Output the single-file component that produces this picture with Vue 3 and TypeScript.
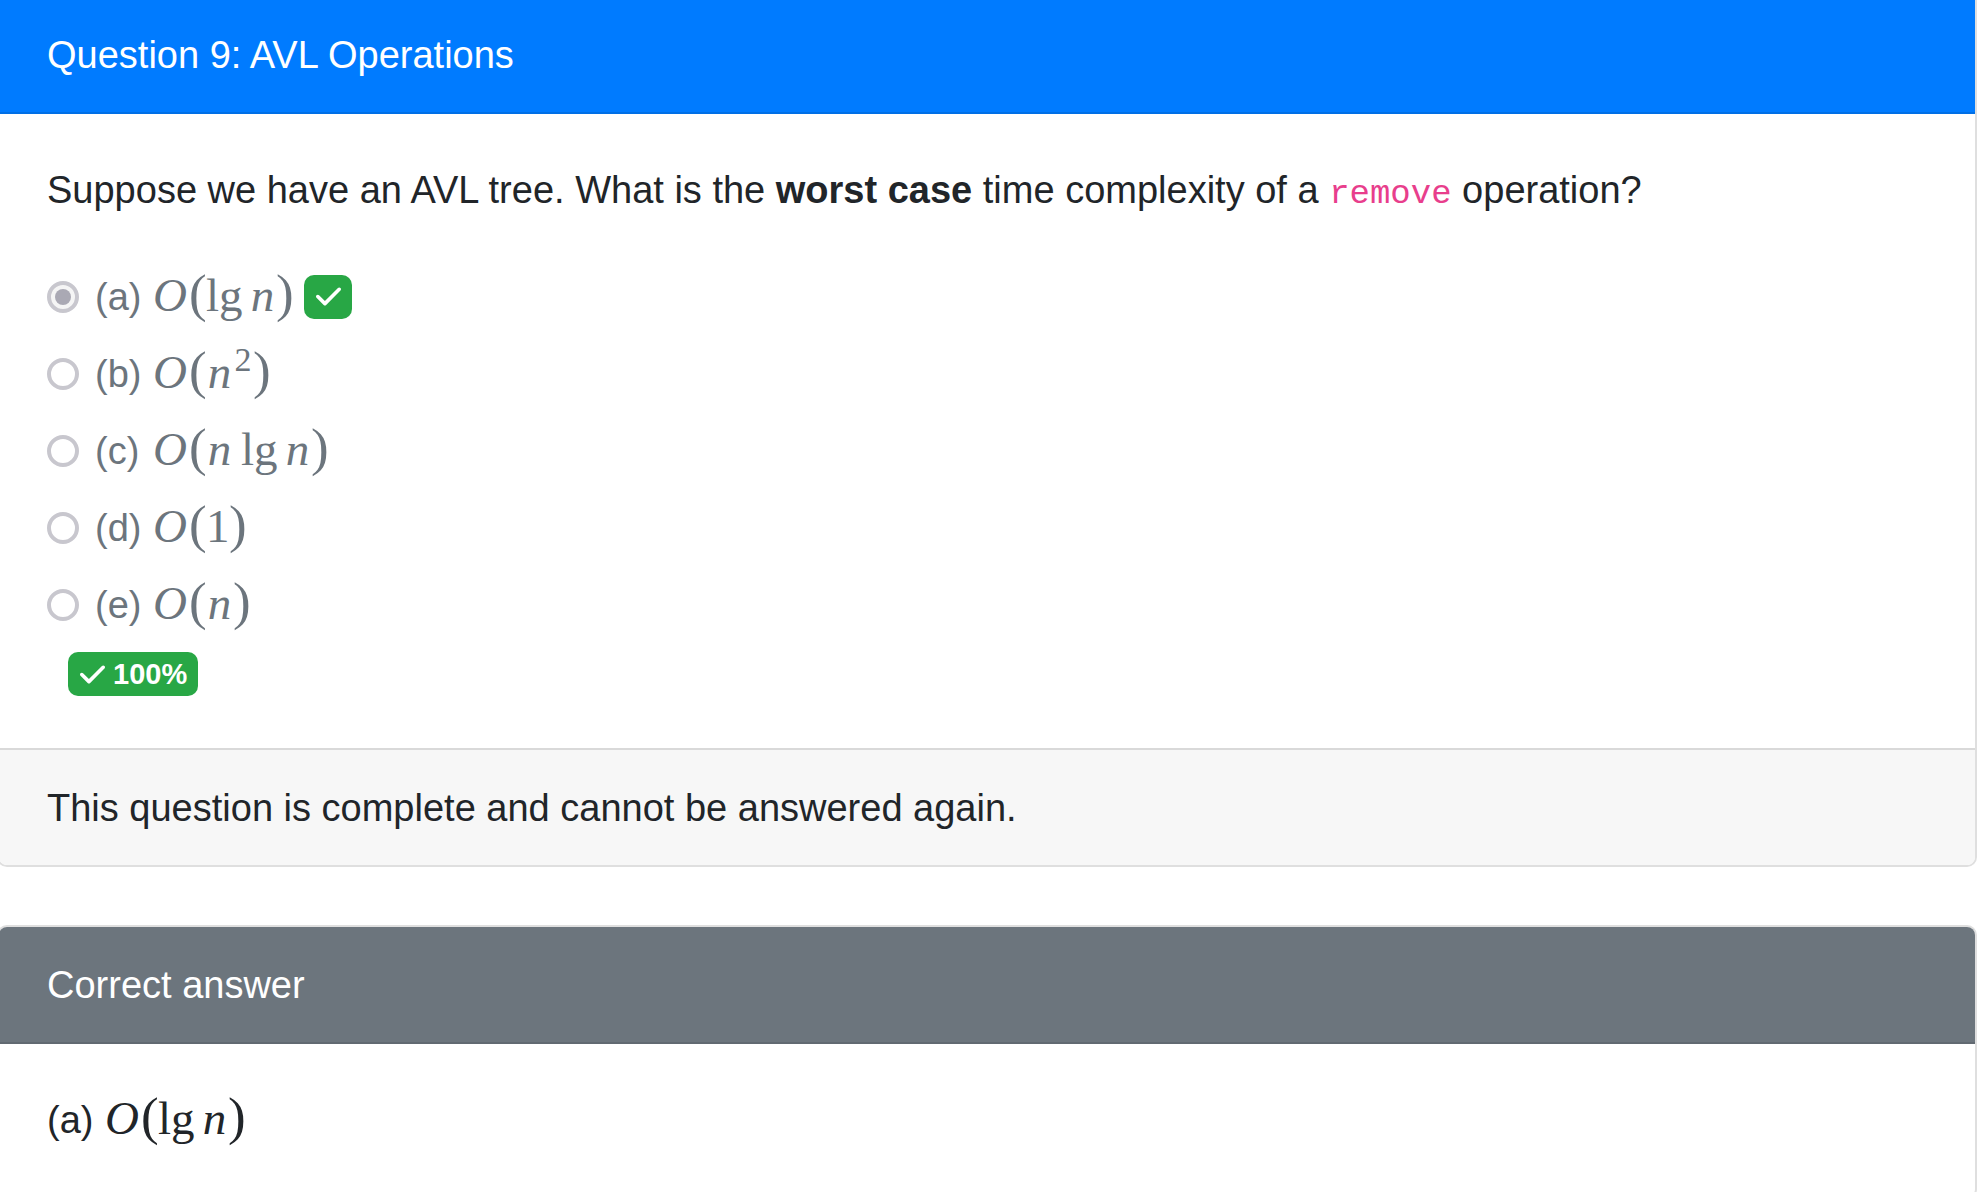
<script setup lang="ts">
interface Atom {
  kind: 'big' | 'var' | 'op' | 'num' | 'open' | 'close' | 'sup'
  text: string
}
interface Choice {
  key: string
  formula: Atom[]
  correct: boolean
}

const O: Atom = { kind: 'big', text: 'O' }
const open: Atom = { kind: 'open', text: '(' }
const close: Atom = { kind: 'close', text: ')' }
const n: Atom = { kind: 'var', text: 'n' }
const lg: Atom = { kind: 'op', text: 'lg' }

const choices: Choice[] = [
  { key: 'a', formula: [O, open, lg, n, close], correct: true },
  { key: 'b', formula: [O, open, n, { kind: 'sup', text: '2' }, close], correct: false },
  { key: 'c', formula: [O, open, n, lg, n, close], correct: false },
  { key: 'd', formula: [O, open, { kind: 'num', text: '1' }, close], correct: false },
  { key: 'e', formula: [O, open, n, close], correct: false },
]

const answer = choices[0]
const checkPath =
  'M438.6 105.4c12.5 12.5 12.5 32.8 0 45.3l-256 256c-12.5 12.5-32.8 12.5-45.3 0l-128-128c-12.5-12.5-12.5-32.8 0-45.3s32.8-12.5 45.3 0L160 338.7 393.4 105.4c12.5-12.5 32.8-12.5 45.3 0z'
</script>

<template>
  <main class="page">
    <section class="card question">
      <h1 class="card-header primary">Question 9: AVL Operations</h1>
      <div class="card-body">
        <p class="prompt">
          Suppose we have an AVL tree. What is the <strong>worst case</strong> time complexity of a
          <code>remove</code> operation?
        </p>
        <div v-for="choice in choices" :key="choice.key" class="choice">
          <input
            :id="'choice-' + choice.key"
            type="radio"
            name="complexity"
            :value="choice.key"
            :checked="choice.correct"
            disabled
          />
          <label :for="'choice-' + choice.key">
            <span class="key">({{ choice.key }})</span>
            <span class="math"><span v-for="(atom, i) in choice.formula" :key="i" :class="atom.kind">{{ atom.text }}</span></span>
          </label>
          <span v-if="choice.correct" class="badge">
            <svg viewBox="0 0 448 512" role="img" aria-label="Correct"><path :d="checkPath" /></svg>
          </span>
        </div>
        <div class="score">
          <span class="badge">
            <svg viewBox="0 0 448 512" aria-hidden="true"><path :d="checkPath" /></svg>
            <span>100%</span>
          </span>
        </div>
      </div>
      <footer class="card-footer">This question is complete and cannot be answered again.</footer>
    </section>

    <section class="card">
      <h2 class="card-header secondary">Correct answer</h2>
      <div class="card-body">
        <div class="answer">
          <span class="key">({{ answer.key }})</span>
          <span class="math"><span v-for="(atom, i) in answer.formula" :key="i" :class="atom.kind">{{ atom.text }}</span></span>
        </div>
      </div>
    </section>
  </main>
</template>

<style>
body {
  margin: 0;
  background: #fff;
}
</style>

<style scoped>
.page {
  box-sizing: border-box;
  height: 100vh;
  overflow: hidden;
  font-family: 'Liberation Sans', Arial, sans-serif;
  font-size: 38px;
  line-height: 58px;
  color: #212529;
}
.card {
  margin: 0 6px 58px -3px;
  border: 2px solid #dfdfdf;
  border-radius: 10px;
  overflow: hidden;
}
.question {
  border-top: 0;
  border-top-left-radius: 0;
  border-top-right-radius: 0;
}
.card-header {
  margin: 0;
  padding: 29px 48px 28px;
  font-size: 38px;
  font-weight: 400;
  color: #fff;
}
.primary {
  padding-top: 26px;
  background: #007bff;
  border-bottom: 2px solid #006fe6;
}
.secondary {
  background: #6c757d;
  border-bottom: 2px solid #616971;
}
.card-body {
  padding: 47px 48px 48px;
}
.prompt {
  margin: 0 0 39px;
}
code {
  font-family: 'Liberation Mono', 'Courier New', monospace;
  font-size: 34px;
  line-height: 34px;
  color: #e83e8c;
}
.choice {
  display: flex;
  align-items: center;
  height: 77px;
  color: #6c757d;
}
.choice input {
  appearance: none;
  box-sizing: border-box;
  flex: none;
  display: grid;
  place-items: center;
  width: 32px;
  height: 32px;
  margin: 0 16px 0 0;
  border: 4px solid #c8c7ce;
  border-radius: 50%;
  background: #fff;
}
.choice input:checked {
  background: #f5f5f5;
}
.choice input:checked::before {
  content: '';
  width: 16px;
  height: 16px;
  border-radius: 50%;
  background: #aaa9b4;
}
.choice label,
.answer {
  display: flex;
  align-items: center;
  gap: 11px;
}
.key {
  width: 47px;
}
.math {
  display: flex;
  align-items: baseline;
  padding-bottom: 6px;
  font-family: 'Liberation Serif', 'Times New Roman', serif;
  font-size: 47px;
  line-height: 46px;
}
.big {
  width: 36px;
  font-style: italic;
}
.open,
.close {
  width: 17px;
  font-size: 53px;
  text-align: center;
}
.var {
  width: 27px;
  font-style: italic;
  text-align: center;
}
.num {
  width: 23px;
}
.op {
  width: 35px;
  margin-right: 8px;
}
.var + .op {
  margin-left: 8px;
}
.sup {
  align-self: flex-start;
  width: 20px;
  font-size: 34px;
  line-height: 26px;
  text-align: center;
}
.badge {
  display: inline-flex;
  align-items: center;
  gap: 8px;
  height: 44px;
  padding: 0 11px 0 12px;
  border-radius: 10px;
  background: #28a745;
  color: #fff;
  font-size: 29px;
  font-weight: 700;
  line-height: 44px;
}
.badge svg {
  width: 25px;
  height: 29px;
  fill: #fff;
}
.choice .badge {
  margin-left: 11px;
}
.score {
  display: flex;
  padding: 9px 21px 4px;
}
.card-footer {
  padding: 29px 48px 28px;
  border-top: 2px solid #d9d9d9;
  background: #f7f7f7;
}
</style>
